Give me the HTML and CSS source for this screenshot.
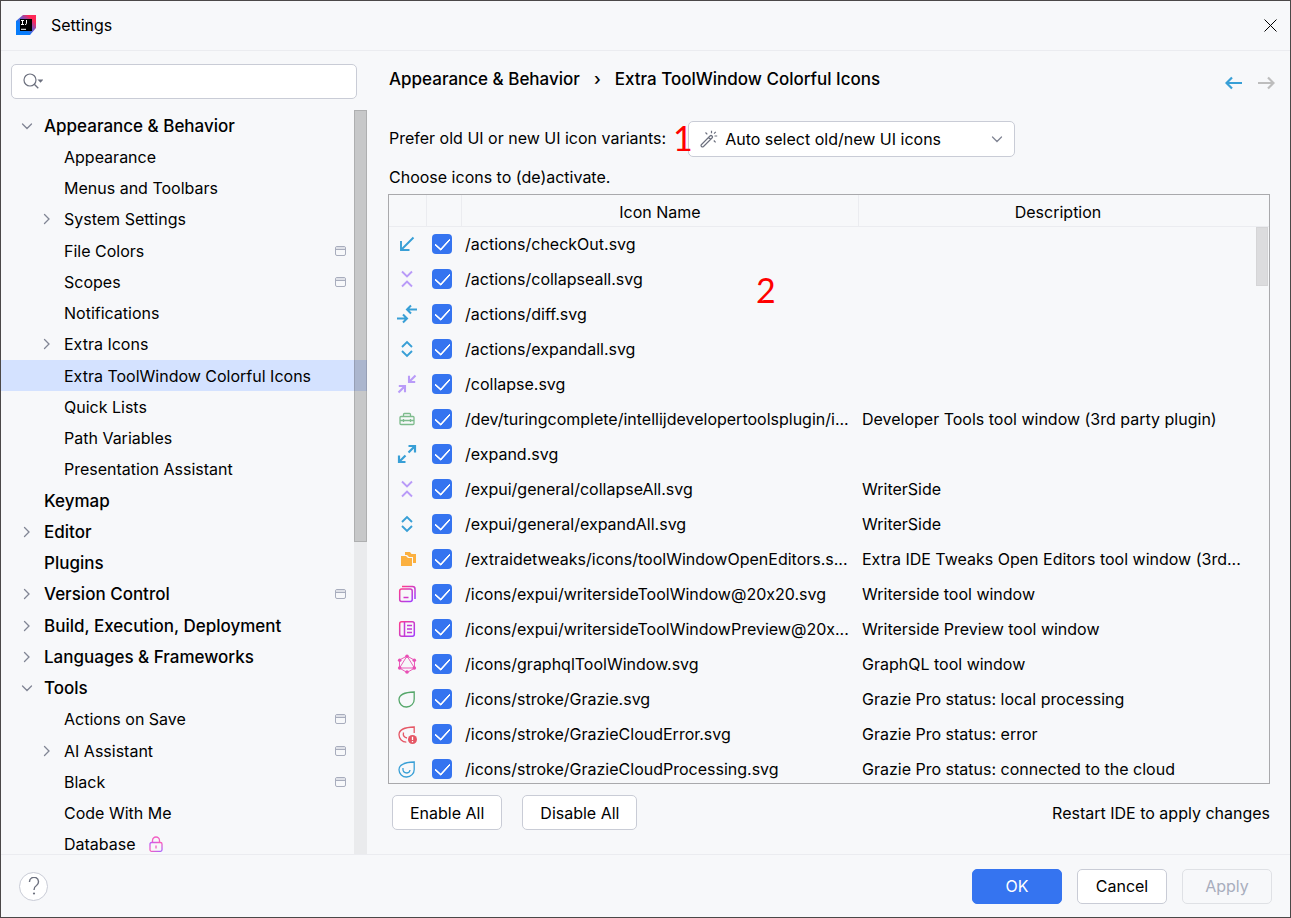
FILE: index.html
```html
<!DOCTYPE html>
<html lang="en">
<head>
<meta charset="utf-8">
<title>Settings</title>
<link rel="stylesheet" href="styles.css">
</head>
<body>
<svg class="sprite" aria-hidden="true">
  <defs>
    <linearGradient id="pinkViolet" x1="0" y1="0" x2="1" y2="1"><stop offset="0" stop-color="#ff3d8b"/><stop offset="1" stop-color="#a03cff"/></linearGradient>
    <linearGradient id="lockTone" x1="0" y1="0" x2="1" y2="1"><stop offset="0" stop-color="#b45cff"/><stop offset=".45" stop-color="#ff5fb8"/><stop offset="1" stop-color="#a763ff"/></linearGradient>
    <linearGradient id="logoTone" x1="0" y1="1" x2="1" y2="0"><stop offset=".35" stop-color="#087cfa"/><stop offset=".6" stop-color="#8a4fb8"/><stop offset=".8" stop-color="#fe2857"/></linearGradient>
    <symbol id="down" viewBox="0 0 20 20"><path d="M5.500 8l4.500 4.500L14.500 8" fill="none" stroke="#818594" stroke-width="1.300" stroke-linecap="round"/></symbol>
    <symbol id="right" viewBox="0 0 20 20"><path d="M7.500 5.500l4.500 4.500-4.500 4.500" fill="none" stroke="#818594" stroke-width="1.300" stroke-linecap="round"/></symbol>
    <symbol id="project" viewBox="0 0 12 12"><rect x=".5" y="1.500" width="10" height="9" rx="1.500" fill="#f7f8fa" stroke="#a8adbd"/><path d="M1 3h9" stroke="#dfe1e8" stroke-width="2"/><path d="M1 4.500h9" stroke="#a8adbd"/></symbol>
    <symbol id="checkout" viewBox="0 0 20 20"><path d="M16.500 3.500L4.500 15.500M4 7v9h8.500" fill="none" stroke="#389fd6" stroke-width="1.900"/></symbol>
    <symbol id="collapse-all" viewBox="0 0 20 20"><path d="M5 2.500l5 5 5-5M5 17.500l5-5 5 5" fill="none" stroke="#b99bf8" stroke-width="1.900"/></symbol>
    <symbol id="expand-all" viewBox="0 0 20 20"><path d="M5 8l5-5 5 5M5 12l5 5 5-5" fill="none" stroke="#389fd6" stroke-width="1.900"/></symbol>
    <symbol id="diff" viewBox="0 0 20 20"><path d="M20 5.500H10.500M14 1.500l-4 4 4 4M0 14.500h9.500M6 10.500l4 4-4 4" fill="none" stroke="#389fd6" stroke-width="2"/></symbol>
    <symbol id="collapse" viewBox="0 0 20 20"><path d="M18.500 1.500L13 7M12 1.800V8h6.200M1.500 18.500L7 13M1.800 12H8v6.200" fill="none" stroke="#b99bf8" stroke-width="2.100"/></symbol>
    <symbol id="expand" viewBox="0 0 20 20"><path d="M11.500 8.500l6-6M11.500 2H18v6.500M8.500 11.500l-6 6M2 11.500V18h6.500" fill="none" stroke="#389fd6" stroke-width="2.200"/></symbol>
    <symbol id="toolbox" viewBox="0 0 20 20"><path d="M4 7.500h12q1 0 1 1v6q0 1-1 1H4q-1 0-1-1v-6q0-1 1-1zM6.500 7.500v-2q0-1 1-1h5q1 0 1 1v2M3 11.500h14M6.500 10v3M13.500 10v3" fill="none" stroke="#7dbb8c" stroke-width="1.300"/></symbol>
    <symbol id="folders" viewBox="0 0 20 20"><path d="M8 3h5l1.500 2H19v9h-3V8h-4L10 6H8z" fill="#fbb040"/><path d="M4 7h5l2 2h4v8H4z" fill="#fbb040"/></symbol>
    <symbol id="writer" viewBox="0 0 20 20"><rect x="2.700" y="5" width="12.500" height="12.500" rx="2" fill="none" stroke="url(#pinkViolet)" stroke-width="1.500"/><path d="M5 2.500h10.500q2.500 0 2.500 2.500v10" fill="none" stroke="url(#pinkViolet)" stroke-width="1.500"/><path d="M6.500 13.500h5" stroke="#d13bc9" stroke-width="1.500"/></symbol>
    <symbol id="preview" viewBox="0 0 20 20"><rect x="2.700" y="2.700" width="14.600" height="14.600" rx="2" fill="none" stroke="url(#pinkViolet)" stroke-width="1.500"/><path d="M7.500 3v14M10 6.500h5M10 10h5M10 13.500h5" stroke="#c63bd4" stroke-width="1.500"/></symbol>
    <symbol id="graphql" viewBox="0 0 20 20"><path d="M10 2l7.500 4.200v8L10 18.500 2.500 14V6zM10 2L2.500 14h15z" fill="none" stroke="#ea5fb9"/><g fill="#e94fb5"><circle cx="10" cy="2.200" r="1.800"/><circle cx="17.300" cy="6.200" r="1.800"/><circle cx="17.300" cy="14" r="1.800"/><circle cx="10" cy="18" r="1.800"/><circle cx="2.700" cy="14" r="1.800"/><circle cx="2.700" cy="6.200" r="1.800"/></g></symbol>
    <symbol id="grazie" viewBox="0 0 20 20"><path d="M17.200 3v7a7.600 7.600 0 0 1-7.700 8A7.300 7.300 0 0 1 2 10.800Q2 3.300 17.200 3z" fill="none" stroke="#55a76a" stroke-width="1.300"/></symbol>
    <symbol id="grazie-error" viewBox="0 0 20 20"><path d="M17.200 9V3Q2 3.300 2 10.800a7.300 7.300 0 0 0 7.300 7.300M6.500 8.500q-1 4.500 3.500 5.500" fill="none" stroke="#e55765" stroke-width="1.300"/><circle cx="15.500" cy="15.500" r="4.500" fill="#e55765"/><path d="M15.500 12.700v3.400M15.500 17v1.300" stroke="#fff" stroke-width="1.300"/></symbol>
    <symbol id="grazie-cloud" viewBox="0 0 20 20"><path d="M17.200 3v7a7.600 7.600 0 0 1-7.700 8A7.300 7.300 0 0 1 2 10.800Q2 3.300 17.200 3zM6 9q-.5 5 4 5 2.500 0 3-3" fill="none" stroke="#389fd6" stroke-width="1.300"/></symbol>
  </defs>
</svg>
<div class="window">
  <header class="titlebar">
    <svg class="logo" viewBox="0 0 20 20" aria-hidden="true"><path d="M0 6L7 0h13v13l-6 7H0z" fill="url(#logoTone)"/><path d="M4 4h12v12H4z" fill="#000"/><path d="M5 5.500h3M6.500 5.500v4M5 9.500h3M10.500 5v3.500q0 1-1.500 1M5 14.300h5" fill="none" stroke="#fff" stroke-width="1"/></svg>
    <h1 class="title">Settings</h1>
    <button class="plain close" type="button" aria-label="Close"><svg viewBox="0 0 13 13"><path d="M.5.500l12 12M12.500.500l-12 12" stroke="#000" fill="none"/></svg></button>
  </header>
  <div class="body">
    <aside class="side">
      <div class="search">
        <input class="search-input" type="text" aria-label="Search settings">
        <svg class="search-icon" viewBox="0 0 20 16" aria-hidden="true"><circle cx="7" cy="7" r="6" fill="none" stroke="#6c707e" stroke-width="1.200"/><path d="M11.300 11.300l4 4" stroke="#6c707e" stroke-width="1.300"/><path d="M14.500 6.500h6L17.500 9.800z" fill="#6c707e"/></svg>
      </div>
      <div class="tree-area">
        <ul class="tree">
          <li class="node top"><svg class="chev"><use href="#down"/></svg><span>Appearance &amp; Behavior</span></li>
          <li class="node sub"><span>Appearance</span></li>
          <li class="node sub"><span>Menus and Toolbars</span></li>
          <li class="node sub"><svg class="chev"><use href="#right"/></svg><span>System Settings</span></li>
          <li class="node sub"><span>File Colors</span><svg class="proj"><use href="#project"/></svg></li>
          <li class="node sub"><span>Scopes</span><svg class="proj"><use href="#project"/></svg></li>
          <li class="node sub"><span>Notifications</span></li>
          <li class="node sub"><svg class="chev"><use href="#right"/></svg><span>Extra Icons</span></li>
          <li class="node sub selected"><span>Extra ToolWindow Colorful Icons</span></li>
          <li class="node sub"><span>Quick Lists</span></li>
          <li class="node sub"><span>Path Variables</span></li>
          <li class="node sub"><span>Presentation Assistant</span></li>
          <li class="node top"><span>Keymap</span></li>
          <li class="node top"><svg class="chev"><use href="#right"/></svg><span>Editor</span></li>
          <li class="node top"><span>Plugins</span></li>
          <li class="node top"><svg class="chev"><use href="#right"/></svg><span>Version Control</span><svg class="proj"><use href="#project"/></svg></li>
          <li class="node top"><svg class="chev"><use href="#right"/></svg><span>Build, Execution, Deployment</span></li>
          <li class="node top"><svg class="chev"><use href="#right"/></svg><span>Languages &amp; Frameworks</span></li>
          <li class="node top"><svg class="chev"><use href="#down"/></svg><span>Tools</span></li>
          <li class="node sub"><span>Actions on Save</span><svg class="proj"><use href="#project"/></svg></li>
          <li class="node sub"><svg class="chev"><use href="#right"/></svg><span>AI Assistant</span><svg class="proj"><use href="#project"/></svg></li>
          <li class="node sub"><span>Black</span><svg class="proj"><use href="#project"/></svg></li>
          <li class="node sub"><span>Code With Me</span></li>
          <li class="node sub"><span>Database</span><svg class="lock" viewBox="0 0 14 16"><rect x="1" y="6.500" width="12" height="8.800" rx="1.500" fill="none" stroke="url(#lockTone)" stroke-width="1.300"/><path d="M3.500 6.500V4.500a3.500 3.500 0 0 1 7 0v2M7 9.500v3" fill="none" stroke="#f25fc4" stroke-width="1.300"/></svg></li>
        </ul>
        <div class="track"><div class="thumb"></div></div>
      </div>
    </aside>
    <main class="main">
      <div class="crumbs">
        <nav class="path"><span>Appearance &amp; Behavior</span><span>›</span><span>Extra ToolWindow Colorful Icons</span></nav>
        <div class="history">
          <button class="plain arrow" type="button" aria-label="Back"><svg viewBox="0 0 17 14"><path d="M17 7H2M7 1.500L1.500 7 7 12.500" fill="none" stroke="#389fd6" stroke-width="2.200"/></svg></button>
          <button class="plain arrow" type="button" aria-label="Forward" disabled><svg viewBox="0 0 17 14"><path d="M0 7h15M10 1.500L15.500 7 10 12.500" fill="none" stroke="#bdbdbd" stroke-width="2.200"/></svg></button>
        </div>
      </div>
      <div class="prefer">
        <label class="prefer-label" for="variant">Prefer old UI or new UI icon variants:</label>
        <div class="combo">
          <select id="variant" class="combo-select"><option>Auto select old/new UI icons</option></select>
          <svg class="wand" viewBox="0 0 18 18" aria-hidden="true"><path d="M1.500 14.500L10 6q1-1 2 0t0 2l-8.500 8.500q-1 .8-2 0t0-2zM8.500 7.500l2 2" fill="none" stroke="#6c707e" stroke-width="1.200"/><path d="M11.500.800v2.400M14.500 6h2.700M14 3.700l1.800-1.800M5.500 2.500l1.800 1.800M13.800 10.500l1.800 1.800" stroke="#6c707e" stroke-width="1.200"/></svg>
          <svg class="combo-chev" aria-hidden="true"><use href="#down"/></svg>
        </div>
      </div>
      <p class="hint">Choose icons to (de)activate.</p>
      <div class="grid-frame">
        <table class="icons">
          <colgroup><col class="c-icon"><col class="c-check"><col class="c-name"><col></colgroup>
          <thead><tr><th></th><th></th><th>Icon Name</th><th>Description</th></tr></thead>
          <tbody>
            <tr><td><svg class="ico"><use href="#checkout"/></svg></td><td><input type="checkbox" checked aria-label="checkOut"></td><td>/actions/checkOut.svg</td><td></td></tr>
            <tr><td><svg class="ico"><use href="#collapse-all"/></svg></td><td><input type="checkbox" checked aria-label="collapseall"></td><td>/actions/collapseall.svg</td><td></td></tr>
            <tr><td><svg class="ico"><use href="#diff"/></svg></td><td><input type="checkbox" checked aria-label="diff"></td><td>/actions/diff.svg</td><td></td></tr>
            <tr><td><svg class="ico"><use href="#expand-all"/></svg></td><td><input type="checkbox" checked aria-label="expandall"></td><td>/actions/expandall.svg</td><td></td></tr>
            <tr><td><svg class="ico"><use href="#collapse"/></svg></td><td><input type="checkbox" checked aria-label="collapse"></td><td>/collapse.svg</td><td></td></tr>
            <tr><td><svg class="ico"><use href="#toolbox"/></svg></td><td><input type="checkbox" checked aria-label="Developer Tools"></td><td>/dev/turingcomplete/intellijdevelopertoolsplugin/i...</td><td>Developer Tools tool window (3rd party plugin)</td></tr>
            <tr><td><svg class="ico"><use href="#expand"/></svg></td><td><input type="checkbox" checked aria-label="expand"></td><td>/expand.svg</td><td></td></tr>
            <tr><td><svg class="ico"><use href="#collapse-all"/></svg></td><td><input type="checkbox" checked aria-label="collapseAll"></td><td>/expui/general/collapseAll.svg</td><td>WriterSide</td></tr>
            <tr><td><svg class="ico"><use href="#expand-all"/></svg></td><td><input type="checkbox" checked aria-label="expandAll"></td><td>/expui/general/expandAll.svg</td><td>WriterSide</td></tr>
            <tr><td><svg class="ico"><use href="#folders"/></svg></td><td><input type="checkbox" checked aria-label="Open Editors"></td><td>/extraidetweaks/icons/toolWindowOpenEditors.s...</td><td>Extra IDE Tweaks Open Editors tool window (3rd...</td></tr>
            <tr><td><svg class="ico"><use href="#writer"/></svg></td><td><input type="checkbox" checked aria-label="Writerside"></td><td>/icons/expui/writersideToolWindow@20x20.svg</td><td>Writerside tool window</td></tr>
            <tr><td><svg class="ico"><use href="#preview"/></svg></td><td><input type="checkbox" checked aria-label="Writerside Preview"></td><td>/icons/expui/writersideToolWindowPreview@20x...</td><td>Writerside Preview tool window</td></tr>
            <tr><td><svg class="ico"><use href="#graphql"/></svg></td><td><input type="checkbox" checked aria-label="GraphQL"></td><td>/icons/graphqlToolWindow.svg</td><td>GraphQL tool window</td></tr>
            <tr><td><svg class="ico"><use href="#grazie"/></svg></td><td><input type="checkbox" checked aria-label="Grazie"></td><td>/icons/stroke/Grazie.svg</td><td>Grazie Pro status: local processing</td></tr>
            <tr><td><svg class="ico"><use href="#grazie-error"/></svg></td><td><input type="checkbox" checked aria-label="Grazie error"></td><td>/icons/stroke/GrazieCloudError.svg</td><td>Grazie Pro status: error</td></tr>
            <tr><td><svg class="ico"><use href="#grazie-cloud"/></svg></td><td><input type="checkbox" checked aria-label="Grazie cloud"></td><td>/icons/stroke/GrazieCloudProcessing.svg</td><td>Grazie Pro status: connected to the cloud</td></tr>
          </tbody>
        </table>
        <div class="grid-thumb"></div>
      </div>
      <div class="actions">
        <button class="btn" type="button">Enable All</button>
        <button class="btn" type="button">Disable All</button>
        <span class="restart">Restart IDE to apply changes</span>
      </div>
      <span class="mark mark-one">1</span>
      <span class="mark mark-two">2</span>
    </main>
  </div>
  <footer class="footer">
    <button class="help" type="button" aria-label="Help"><svg viewBox="0 0 12 18"><path d="M1.500 5a4.500 4.500 0 1 1 7 3.500Q6 10 6 13" fill="none" stroke="#6c707e" stroke-width="1.400"/><circle cx="6" cy="16.500" r="1.100" fill="#6c707e"/></svg></button>
    <button class="btn wide primary" type="button">OK</button>
    <button class="btn wide" type="button">Cancel</button>
    <button class="btn wide" type="button" disabled>Apply</button>
  </footer>
</div>
</body>
</html>
```
FILE: styles.css
```css
* { box-sizing: border-box; }
body { margin: 0; font: 16px/20px Inter, "Liberation Sans", sans-serif; font-feature-settings: "calt" 0; color: #000; background: #f7f8fa; }
.sprite { position: absolute; width: 0; height: 0; }
svg { display: block; flex: none; }
button, input, select { font: inherit; color: inherit; }
.window { height: 100vh; display: flex; flex-direction: column; border: 1px solid #4b4848; overflow: hidden; }
.plain { border: 0; padding: 0; background: none; }

.titlebar { height: 50px; flex: none; display: flex; align-items: center; padding: 0 13px 1px 15px; border-bottom: 1px solid #ebecf0; }
.logo { width: 20px; height: 20px; }
.title { margin: 0 0 0 15px; font-size: 16px; font-weight: 400; }
.close { margin-left: auto; }
.close svg { width: 13px; height: 13px; }

.body { flex: 1; min-height: 0; display: flex; }
.side { width: 366px; flex: none; display: flex; flex-direction: column; }
.search { position: relative; margin: 13px 10px 11px; }
.search-input { display: block; width: 100%; height: 35px; padding: 0 12px 0 40px; border: 1px solid #c9ccd6; border-radius: 5px; background: #fff; }
.search-icon { position: absolute; left: 12px; top: 9px; width: 20px; height: 16px; }
.tree-area { position: relative; flex: 1; min-height: 0; overflow: hidden; }
.tree { list-style: none; margin: 0; padding: 0; height: calc(100% + 6px); display: grid; grid-auto-rows: 1fr; }
.node { display: flex; align-items: center; padding-right: 20px; white-space: nowrap; }
.top { padding-left: 43px; font-size: 17px; font-weight: 500; }
.sub { padding-left: 63px; }
.selected { background: #d4e2ff; }
.chev { width: 20px; height: 20px; margin-left: -27px; margin-right: 7px; }
.proj { width: 12px; height: 12px; margin-left: auto; }
.lock { width: 14px; height: 16px; margin-left: 13px; }
.track { position: absolute; top: 0; right: 0; bottom: 0; width: 13px; background: rgba(0, 0, 0, .05); }
.thumb { height: 58%; border: 1px solid rgba(0, 0, 0, .12); background: rgba(0, 0, 0, .15); }

.main { position: relative; flex: 1; min-width: 0; display: flex; flex-direction: column; padding: 18px 20px 24px 22px; }
.crumbs { display: flex; justify-content: space-between; height: 20px; }
.path { display: flex; gap: 14px; font-size: 17px; font-weight: 500; }
.history { display: flex; gap: 16px; align-items: center; margin: 8px -5px 0 0; }
.arrow svg { width: 17px; height: 14px; }
.prefer { display: flex; align-items: center; gap: 22px; margin-top: 32px; }
.prefer-label { padding-bottom: 2px; }
.combo { position: relative; width: 327px; }
.combo-select { appearance: none; display: block; width: 100%; height: 36px; padding: 0 36px; border: 1px solid #c9ccd6; border-radius: 5px; background: #fff; }
.wand { position: absolute; left: 12px; top: 9px; width: 18px; height: 18px; }
.combo-chev { position: absolute; right: 8px; top: 8px; width: 20px; height: 20px; }
.hint { margin: 10px 0 7px; }
.grid-frame { position: relative; flex: 1; min-height: 0; margin-left: -1px; border: 1px solid #a9a9ac; overflow: hidden; }
.icons { width: 100%; table-layout: fixed; border-collapse: separate; border-spacing: 0; }
.c-icon { width: 38px; }
.c-check { width: 35px; }
.c-name { width: 397px; }
.icons th { height: 32px; padding: 2px 0 0; font-weight: 400; border-bottom: 1px solid #ebecf0; }
.icons th:not(:last-child) { border-right: 1px solid #ebecf0; }
.icons th:last-child { padding-right: 12px; }
.icons td { height: 35px; padding: 0 0 2px 3px; white-space: nowrap; }
.icons td:first-child { padding-left: 8px; }
.ico { width: 20px; height: 20px; }
.icons input { appearance: none; display: grid; place-items: center; width: 20px; height: 20px; margin: 0 0 0 2px; padding: 0 0 3px; border-radius: 4px; background: #3574f0; }
.icons input::after { content: ""; width: 7px; height: 13px; border: solid #fff; border-width: 0 2px 2px 0; border-radius: 1px; transform: rotate(42deg); }
.grid-thumb { position: absolute; right: 1px; top: 32px; width: 12px; height: 59px; border: 1px solid #d5d5d7; background: #dcdcde; }

.actions { display: flex; align-items: center; gap: 20px; margin-top: 11px; padding-left: 3px; }
.btn { height: 35px; padding: 0 17px; border: 1px solid #c9ccd6; border-radius: 5px; background: #fff; }
.restart { margin-left: auto; }
.mark { position: absolute; font: 34px/36px Lato, sans-serif; color: #f00; }
.mark-one { left: 306px; top: 69px; }
.mark-two { left: 389px; top: 221px; }

.footer { height: 63px; flex: none; display: flex; align-items: center; gap: 15px; padding: 0 18px; border-top: 1px solid #ebecf0; }
.help { width: 29px; height: 29px; margin-right: auto; padding: 0; display: grid; place-items: center; border: 1px solid #c9ccd6; border-radius: 50%; background: #fff; }
.help svg { width: 12px; height: 18px; }
.wide { width: 90px; padding: 0; }
.primary { background: #3574f0; border-color: #3574f0; color: #fff; }
.btn:disabled { background: transparent; border-color: #dfe1e5; color: #a8adbd; }
```
